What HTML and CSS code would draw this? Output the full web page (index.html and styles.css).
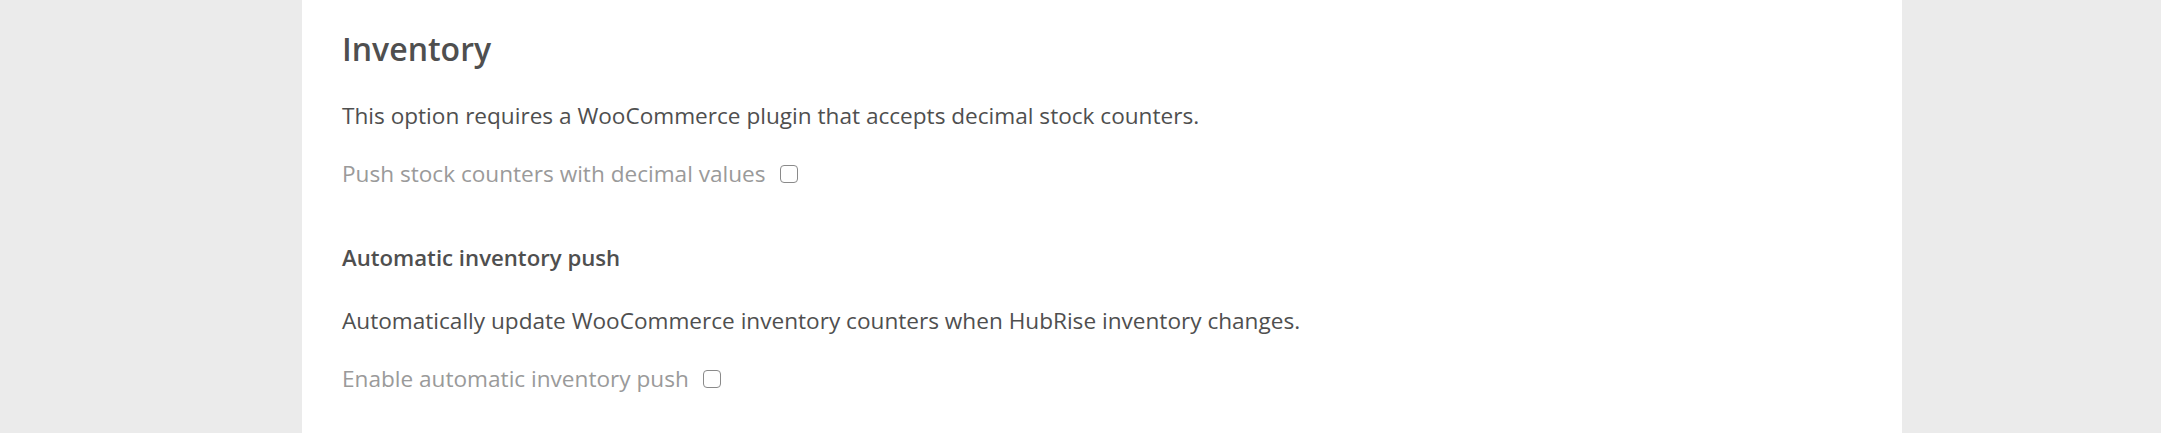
FILE: index.html
```html
<!DOCTYPE html>
<html lang="en">

<head>
    <meta charset="UTF-8">
    <meta name="viewport" content="width=device-width, initial-scale=1.0">
    <title>Inventory settings</title>
    <link rel="stylesheet" href="styles.css">
</head>

<body>

    <div class="page">
        <section class="settings">
            <h2 class="settings-title">Inventory</h2>

            <p class="settings-text">This option requires a WooCommerce plugin that accepts decimal stock counters.</p>

            <label class="settings-option">
                Push stock counters with decimal values
                <input type="checkbox" class="settings-checkbox" name="decimal_stock">
            </label>

            <h3 class="settings-subtitle">Automatic inventory push</h3>

            <p class="settings-text">Automatically update WooCommerce inventory counters when HubRise inventory changes.</p>

            <label class="settings-option">
                Enable automatic inventory push
                <input type="checkbox" class="settings-checkbox" name="auto_push">
            </label>
        </section>
    </div>

</body>

</html>
```

FILE: styles.css
```css
body {
    margin: 0;
    padding: 0;
    background-color: #ebebeb;
    font-family: 'Open Sans', 'Noto Sans', sans-serif;
    color: #4f4f4f;
}

.page {
    padding-left: 302px;
}

.settings {
    width: 1600px;
    min-height: 433px;
    box-sizing: border-box;
    padding: 27px 40px 0;
    background-color: #fff;
}

.settings-title {
    margin: 0 0 29px;
    font-size: 32px;
    font-weight: 600;
    line-height: 44px;
}

.settings-text {
    margin: 0 0 26px;
    font-size: 22.6px;
    line-height: 32px;
}

.settings-option {
    display: flex;
    align-items: center;
    gap: 14px;
    font-size: 22.6px;
    line-height: 32px;
    color: #9a9a9a;
}

.settings-checkbox {
    appearance: none;
    width: 18px;
    height: 18px;
    margin: 0;
    border: 1.5px solid #8a8a8a;
    border-radius: 4px;
    background-color: #fff;
}

.settings-subtitle {
    margin: 52px 0 31px;
    font-size: 22.2px;
    font-weight: 600;
    line-height: 32px;
}
```
